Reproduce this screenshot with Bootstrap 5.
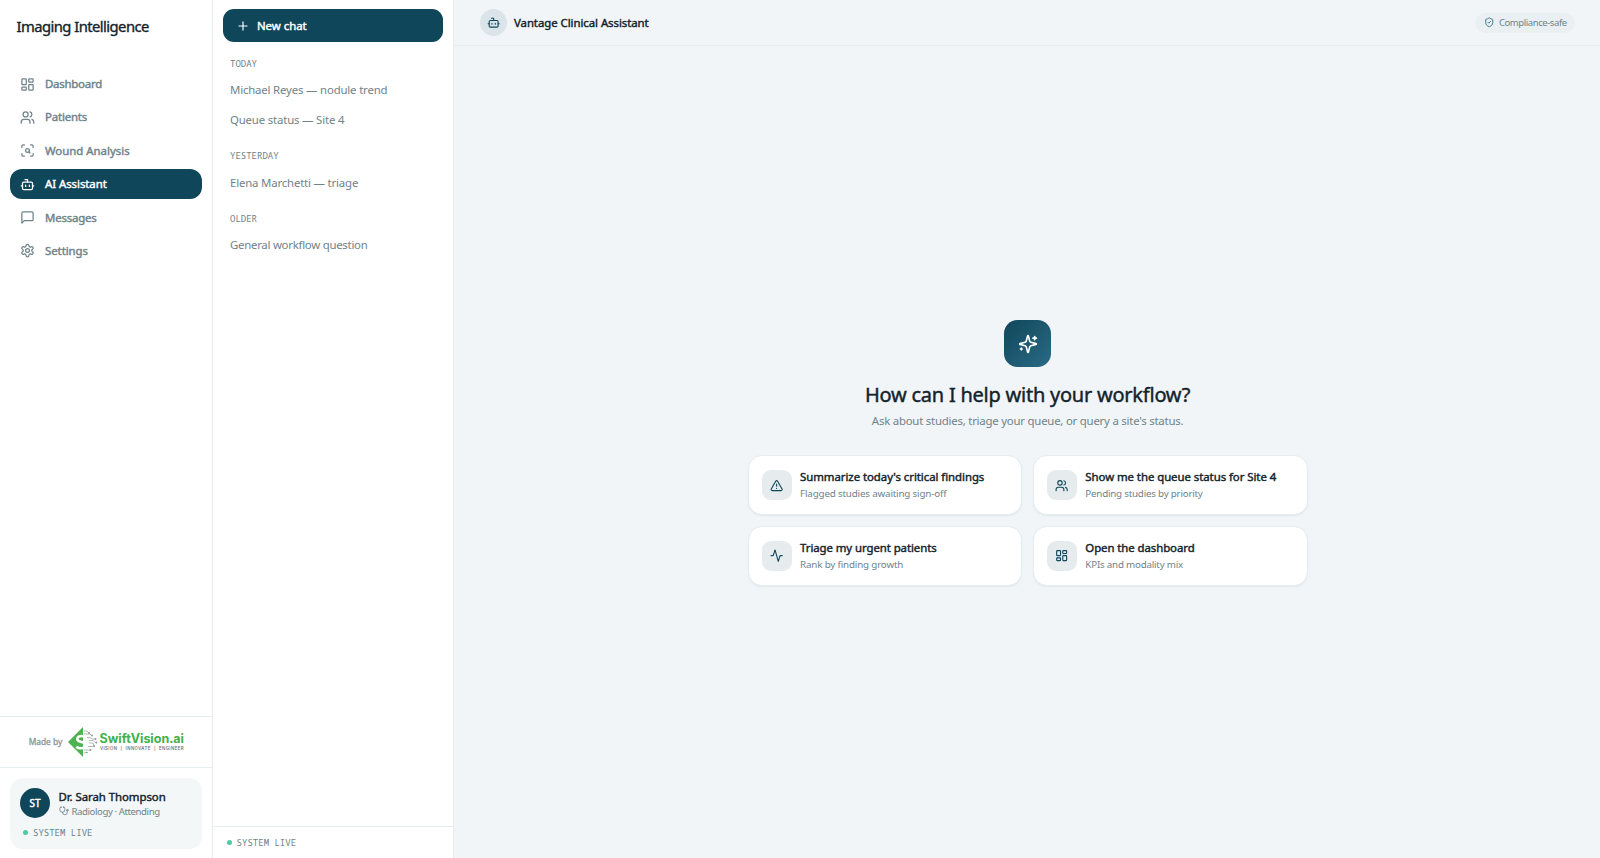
<!DOCTYPE html>
<html lang="en"><head><meta charset="utf-8"><title>Imaging Intelligence</title>
<meta name="viewport" content="width=device-width, initial-scale=1">
<link href="https://cdn.jsdelivr.net/npm/bootstrap@5.3.0/dist/css/bootstrap.min.css" rel="stylesheet">
<style>
:root{--ink:#13232b;--teal:#10465a;--slate:#6f838a;--line:#e6edf0;--canvas:#f1f5f8}
body{font-family:"Noto Sans",sans-serif;font-size:11.4px;line-height:16px;color:var(--ink);background:var(--canvas)}
svg.ico{fill:none;stroke:currentColor;stroke-width:2;stroke-linecap:round;stroke-linejoin:round;flex:none;display:block}
.semi{-webkit-text-stroke:.42px currentColor}
.medium{-webkit-text-stroke:.35px currentColor}
/* tracking steps */
.t1{letter-spacing:-.05px}.t2{letter-spacing:-.07px}.t3{letter-spacing:-.12px}.t4{letter-spacing:-.17px}
.t5{letter-spacing:-.222px}.t6{letter-spacing:-.257px}
.mono{font-family:"Noto Sans Mono","DejaVu Sans Mono",monospace;font-size:9px;line-height:12px;letter-spacing:.01px;color:var(--slate)}
.side{width:213.4px;border-right:1px solid var(--line)}
.history{width:240.6px;border-right:1px solid var(--line)}
.brand{font-size:14.8px;line-height:20px;padding:15.5px 16.5px 0;height:69px;letter-spacing:-.56px}
.menu{padding:0 10px;gap:3.4px}
.menu .nav-link{height:30px;padding:0 10px;gap:10px;border-radius:12px;color:var(--slate)}
.menu .nav-link.active{background:var(--teal);color:#fff}
.made{height:51.5px;border-top:1px solid var(--line);border-bottom:1px solid var(--line);gap:5.5px;padding-left:1px}
.made-label{font-size:8.4px;color:#8d9ca3}
.user-box{margin:10.5px 10px 9.5px;height:70.5px;border-radius:13px;background:#f3f7f8;padding:10px}
.user-text{margin-left:8.5px}
.user-text .ico{margin-right:3px}
.user-live{margin:8.5px 0 0 3.3px;gap:4.7px}
.avatar{width:30px;height:30px;background:var(--teal);color:#fff;font-size:10px}
.role{font-size:9.6px;line-height:13px;letter-spacing:-.41px;color:var(--slate)}
.dot{width:5px;height:5px;border-radius:50%;background:#4fcba2}
.new-chat{margin:9px 10px 0;height:33.3px;border-radius:11px;background:var(--teal);color:#fff;padding:0 13px;gap:6.5px}
.group-title{padding:0 16.6px;margin:15px 0 5.5px}
.new-chat + .group-title{margin-top:15.5px}
.talk{height:30px;padding:0 16.6px;color:var(--slate)}
.live{height:32px;border-top:1px solid var(--line);padding-left:13.5px;gap:4.7px}
.top{height:46px;border-bottom:1px solid var(--line);padding:0 25px 0 26.5px}
.bot{width:27px;height:27px;background:#dae4e9;color:var(--teal);margin-right:6.5px}
.pill{height:20px;border-radius:10px;background:#eaf0f2;color:var(--slate);font-size:9.5px;padding:0 8.3px 0 8.5px;gap:4.6px;letter-spacing:-.42px}
.pill .ico{color:#2a6b86}
.welcome{padding:2px 0 0 1.2px}
.spark{width:47px;height:47px;border-radius:13.5px;background:linear-gradient(135deg,#10465a,#2a6b86);color:#fff}
.ask{font-size:20px;line-height:28px;margin:14px 0 3.5px;letter-spacing:-.235px}
.sub{color:var(--slate)}
.tiles{width:560px;display:grid;grid-template-columns:1fr 1fr;gap:10.5px;margin-top:26.5px}
.tile{height:60px;border:1px solid var(--line);border-radius:14px;background:#fff;box-shadow:0 1px 2px rgba(16,70,90,.07);padding:0 13px;gap:8.5px}
.tile-ico{width:30px;height:30px;border-radius:9px;background:#e6ecee;color:var(--teal)}
.tile-name{line-height:16px;margin-top:1px}
.tile-note{font-size:9.8px;line-height:16px;color:var(--slate);padding-top:1px}
</style></head><body>
<svg class="d-none"><defs>
<g id="i-dash"><rect x="3" y="3" width="7" height="9" rx="1"/><rect x="14" y="3" width="7" height="5" rx="1"/><rect x="14" y="12" width="7" height="9" rx="1"/><rect x="3" y="16" width="7" height="5" rx="1"/></g>
<g id="i-users"><path d="M16 21v-2a4 4 0 0 0-4-4H6a4 4 0 0 0-4 4v2"/><circle cx="9" cy="7" r="4"/><path d="M22 21v-2a4 4 0 0 0-3-3.870M16 3.130a4 4 0 0 1 0 7.750"/></g>
<g id="i-scan"><path d="M3 7V5a2 2 0 0 1 2-2h2M17 3h2a2 2 0 0 1 2 2v2M21 17v2a2 2 0 0 1-2 2h-2M7 21H5a2 2 0 0 1-2-2v-2"/><circle cx="12" cy="12" r="3"/><path d="m16 16-1.900-1.900"/></g>
<g id="i-bot"><path d="M12 8V4H8"/><rect x="4" y="8" width="16" height="12" rx="2"/><path d="M2 14h2M20 14h2M15 13v2M9 13v2"/></g>
<g id="i-msg"><path d="M21 15a2 2 0 0 1-2 2H7l-4 4V5a2 2 0 0 1 2-2h14a2 2 0 0 1 2 2z"/></g>
<g id="i-gear"><path d="M12.22 2h-.44a2 2 0 0 0-2 2v.18a2 2 0 0 1-1 1.73l-.43.25a2 2 0 0 1-2 0l-.15-.08a2 2 0 0 0-2.73.73l-.22.38a2 2 0 0 0 .73 2.73l.15.1a2 2 0 0 1 1 1.72v.51a2 2 0 0 1-1 1.74l-.15.09a2 2 0 0 0-.73 2.73l.22.38a2 2 0 0 0 2.73.73l.15-.08a2 2 0 0 1 2 0l.43.25a2 2 0 0 1 1 1.73V20a2 2 0 0 0 2 2h.44a2 2 0 0 0 2-2v-.18a2 2 0 0 1 1-1.73l.43-.25a2 2 0 0 1 2 0l.15.08a2 2 0 0 0 2.73-.73l.22-.39a2 2 0 0 0-.73-2.73l-.15-.08a2 2 0 0 1-1-1.74v-.5a2 2 0 0 1 1-1.74l.15-.09a2 2 0 0 0 .73-2.73l-.22-.38a2 2 0 0 0-2.73-.73l-.15.08a2 2 0 0 1-2 0l-.43-.25a2 2 0 0 1-1-1.73V4a2 2 0 0 0-2-2z"/><circle cx="12" cy="12" r="3"/></g>
</defs></svg>
<div class="d-flex vh-100 overflow-hidden">
<aside class="side bg-white d-flex flex-column flex-shrink-0">
 <div class="brand medium">Imaging Intelligence</div>
 <nav class="menu nav flex-column flex-grow-1 flex-nowrap">
  <a class="nav-link d-flex align-items-center semi t5"><svg class="ico" width="15" height="15" viewBox="0 0 24 24"><use href="#i-dash"/></svg>Dashboard</a>
  <a class="nav-link d-flex align-items-center semi t4"><svg class="ico" width="15" height="15" viewBox="0 0 24 24"><use href="#i-users"/></svg>Patients</a>
  <a class="nav-link d-flex align-items-center semi"><svg class="ico" width="15" height="15" viewBox="0 0 24 24"><use href="#i-scan"/></svg>Wound Analysis</a>
  <a class="nav-link active d-flex align-items-center semi t1"><svg class="ico" width="15" height="15" viewBox="0 0 24 24"><use href="#i-bot"/></svg>AI Assistant</a>
  <a class="nav-link d-flex align-items-center semi t4"><svg class="ico" width="15" height="15" viewBox="0 0 24 24"><use href="#i-msg"/></svg>Messages</a>
  <a class="nav-link d-flex align-items-center semi t1"><svg class="ico" width="15" height="15" viewBox="0 0 24 24"><use href="#i-gear"/></svg>Settings</a>
 </nav>
 <div class="made d-flex align-items-center justify-content-center"><span class="made-label medium">Made by</span>
  <svg width="117" height="32" viewBox="0 0 117 32">
   <path d="M15 1v30L0 16z" fill="#4db350"/>
   <g fill="none" stroke="#a3a9aa" stroke-width=".8"><path d="M16 5h3l2 2M16 8h6l1.500 1.500M19 11.500h3l2 1.500h3M21 14.500h4l2 2M21 17h4l1 2.500M20 20.500h5M16 24h6M16 27l3-1"/></g>
   <path d="M18 11.300c-1-1-2.500-1.300-4.300-1.300-2.700 0-4.400 1.200-4.400 3.100 0 4.200 8.400 1.700 8.400 6 0 2-1.900 3.200-4.700 3.200-1.900 0-3.500-.5-4.700-1.600" fill="none" stroke="#fff" stroke-width="2.600"/>
   <g fill="#8d9495"><circle cx="21" cy="7" r=".9"/><circle cx="24" cy="9.500" r=".9"/><circle cx="27.500" cy="13" r="1"/><circle cx="28.300" cy="16.500" r="1"/><circle cx="26" cy="20" r="1"/><circle cx="22.500" cy="24" r=".9"/><circle cx="19" cy="26.500" r=".8"/></g>
   <text x="31.500" y="17" font-family="Inter" font-weight="700" font-size="12.800" textLength="84.500" lengthAdjust="spacingAndGlyphs" fill="#43b04a">SwiftVision.ai</text>
   <text x="32" y="24" font-family="Inter" font-weight="500" font-size="4.300" textLength="83.500" fill="#5c6466">VISION &#160;|&#160; INNOVATE &#160;|&#160; ENGINEER</text>
  </svg></div>
 <div class="user-box">
  <div class="d-flex align-items-center"><div class="avatar rounded-circle d-flex align-items-center justify-content-center semi">ST</div>
   <div class="user-text"><div class="semi t1">Dr. Sarah Thompson</div>
   <div class="role d-flex align-items-center"><svg class="ico" width="10" height="10" viewBox="0 0 24 24"><path d="M11 2v2M5 2v2M5 3H4a2 2 0 0 0-2 2v4a6 6 0 0 0 12 0V5a2 2 0 0 0-2-2h-1M8 15a6 6 0 0 0 12 0v-3"/><circle cx="20" cy="10" r="2"/></svg>Radiology · Attending</div></div></div>
  <div class="user-live mono d-flex align-items-center"><i class="dot"></i>SYSTEM LIVE</div>
 </div>
</aside>
<section class="history bg-white d-flex flex-column flex-shrink-0">
 <a class="new-chat d-flex align-items-center semi text-decoration-none"><svg class="ico" width="14" height="14" viewBox="0 0 24 24"><path d="M5 12h14M12 5v14"/></svg>New chat</a>
 <div class="group-title mono">TODAY</div>
 <div class="talk d-flex align-items-center t4">Michael Reyes — nodule trend</div>
 <div class="talk d-flex align-items-center t4">Queue status — Site 4</div>
 <div class="group-title mono">YESTERDAY</div>
 <div class="talk d-flex align-items-center t4">Elena Marchetti — triage</div>
 <div class="group-title mono">OLDER</div>
 <div class="talk d-flex align-items-center t6">General workflow question</div>
 <div class="live mono mt-auto d-flex align-items-center"><i class="dot"></i>SYSTEM LIVE</div>
</section>
<main class="flex-grow-1 d-flex flex-column">
 <header class="top d-flex align-items-center">
  <div class="bot rounded-circle d-flex align-items-center justify-content-center"><svg class="ico" width="13.300" height="13.300" viewBox="0 0 24 24"><use href="#i-bot"/></svg></div>
  <span class="semi t1">Vantage Clinical Assistant</span>
  <div class="pill d-flex align-items-center ms-auto"><svg class="ico" width="10.500" height="10.500" viewBox="0 0 24 24"><path d="M20 13c0 5-3.500 7.500-7.660 8.950a1 1 0 0 1-.67-.01C7.500 20.500 4 18 4 13V6a1 1 0 0 1 1-1c2 0 4.500-1.200 6.240-2.720a1.170 1.170 0 0 1 1.520 0C14.510 3.810 17 5 19 5a1 1 0 0 1 1 1zM9 12l2 2 4-4"/></svg>Compliance-safe</div>
 </header>
 <div class="welcome flex-grow-1 d-flex flex-column align-items-center justify-content-center">
  <div class="spark d-flex align-items-center justify-content-center"><svg class="ico" width="20" height="20" viewBox="0 0 24 24"><path d="M9.937 15.500A2 2 0 0 0 8.500 14.063l-6.135-1.582a.5.5 0 0 1 0-.962L8.500 9.936A2 2 0 0 0 9.937 8.500l1.582-6.135a.5.5 0 0 1 .963 0L14.063 8.500A2 2 0 0 0 15.500 9.937l6.135 1.581a.5.5 0 0 1 0 .964L15.500 14.063a2 2 0 0 0-1.437 1.437l-1.582 6.135a.5.5 0 0 1-.963 0zM20 3v4M22 5h-4M4 17v2M5 18H3"/></svg></div>
  <h1 class="ask semi fw-normal">How can I help with your workflow?</h1>
  <div class="sub t5">Ask about studies, triage your queue, or query a site's status.</div>
  <div class="tiles">
   <div class="tile d-flex align-items-center"><div class="tile-ico d-flex align-items-center justify-content-center"><svg class="ico" width="13.300" height="13.300" viewBox="0 0 24 24"><path d="m21.730 18-8-14a2 2 0 0 0-3.480 0l-8 14A2 2 0 0 0 4 21h16a2 2 0 0 0 1.730-3M12 9v4M12 17h.01"/></svg></div><div><div class="tile-name semi t1">Summarize today's critical findings</div><div class="tile-note t4">Flagged studies awaiting sign-off</div></div></div>
   <div class="tile d-flex align-items-center"><div class="tile-ico d-flex align-items-center justify-content-center"><svg class="ico" width="13.300" height="13.300" viewBox="0 0 24 24"><use href="#i-users"/></svg></div><div><div class="tile-name semi t1">Show me the queue status for Site 4</div><div class="tile-note t5">Pending studies by priority</div></div></div>
   <div class="tile d-flex align-items-center"><div class="tile-ico d-flex align-items-center justify-content-center"><svg class="ico" width="13.300" height="13.300" viewBox="0 0 24 24"><path d="M22 12h-2.480a2 2 0 0 0-1.930 1.460l-2.350 8.360a.25.25 0 0 1-.48 0L9.240 2.180a.25.25 0 0 0-.48 0l-2.350 8.360A2 2 0 0 1 4.490 12H2"/></svg></div><div><div class="tile-name semi t2">Triage my urgent patients</div><div class="tile-note t4">Rank by finding growth</div></div></div>
   <div class="tile d-flex align-items-center"><div class="tile-ico d-flex align-items-center justify-content-center"><svg class="ico" width="13.300" height="13.300" viewBox="0 0 24 24"><use href="#i-dash"/></svg></div><div><div class="tile-name semi t2">Open the dashboard</div><div class="tile-note t5">KPIs and modality mix</div></div></div>
  </div>
 </div>
</main>
</div>
<script src="https://cdn.jsdelivr.net/npm/bootstrap@5.3.0/dist/js/bootstrap.bundle.min.js"></script>
</body></html>
